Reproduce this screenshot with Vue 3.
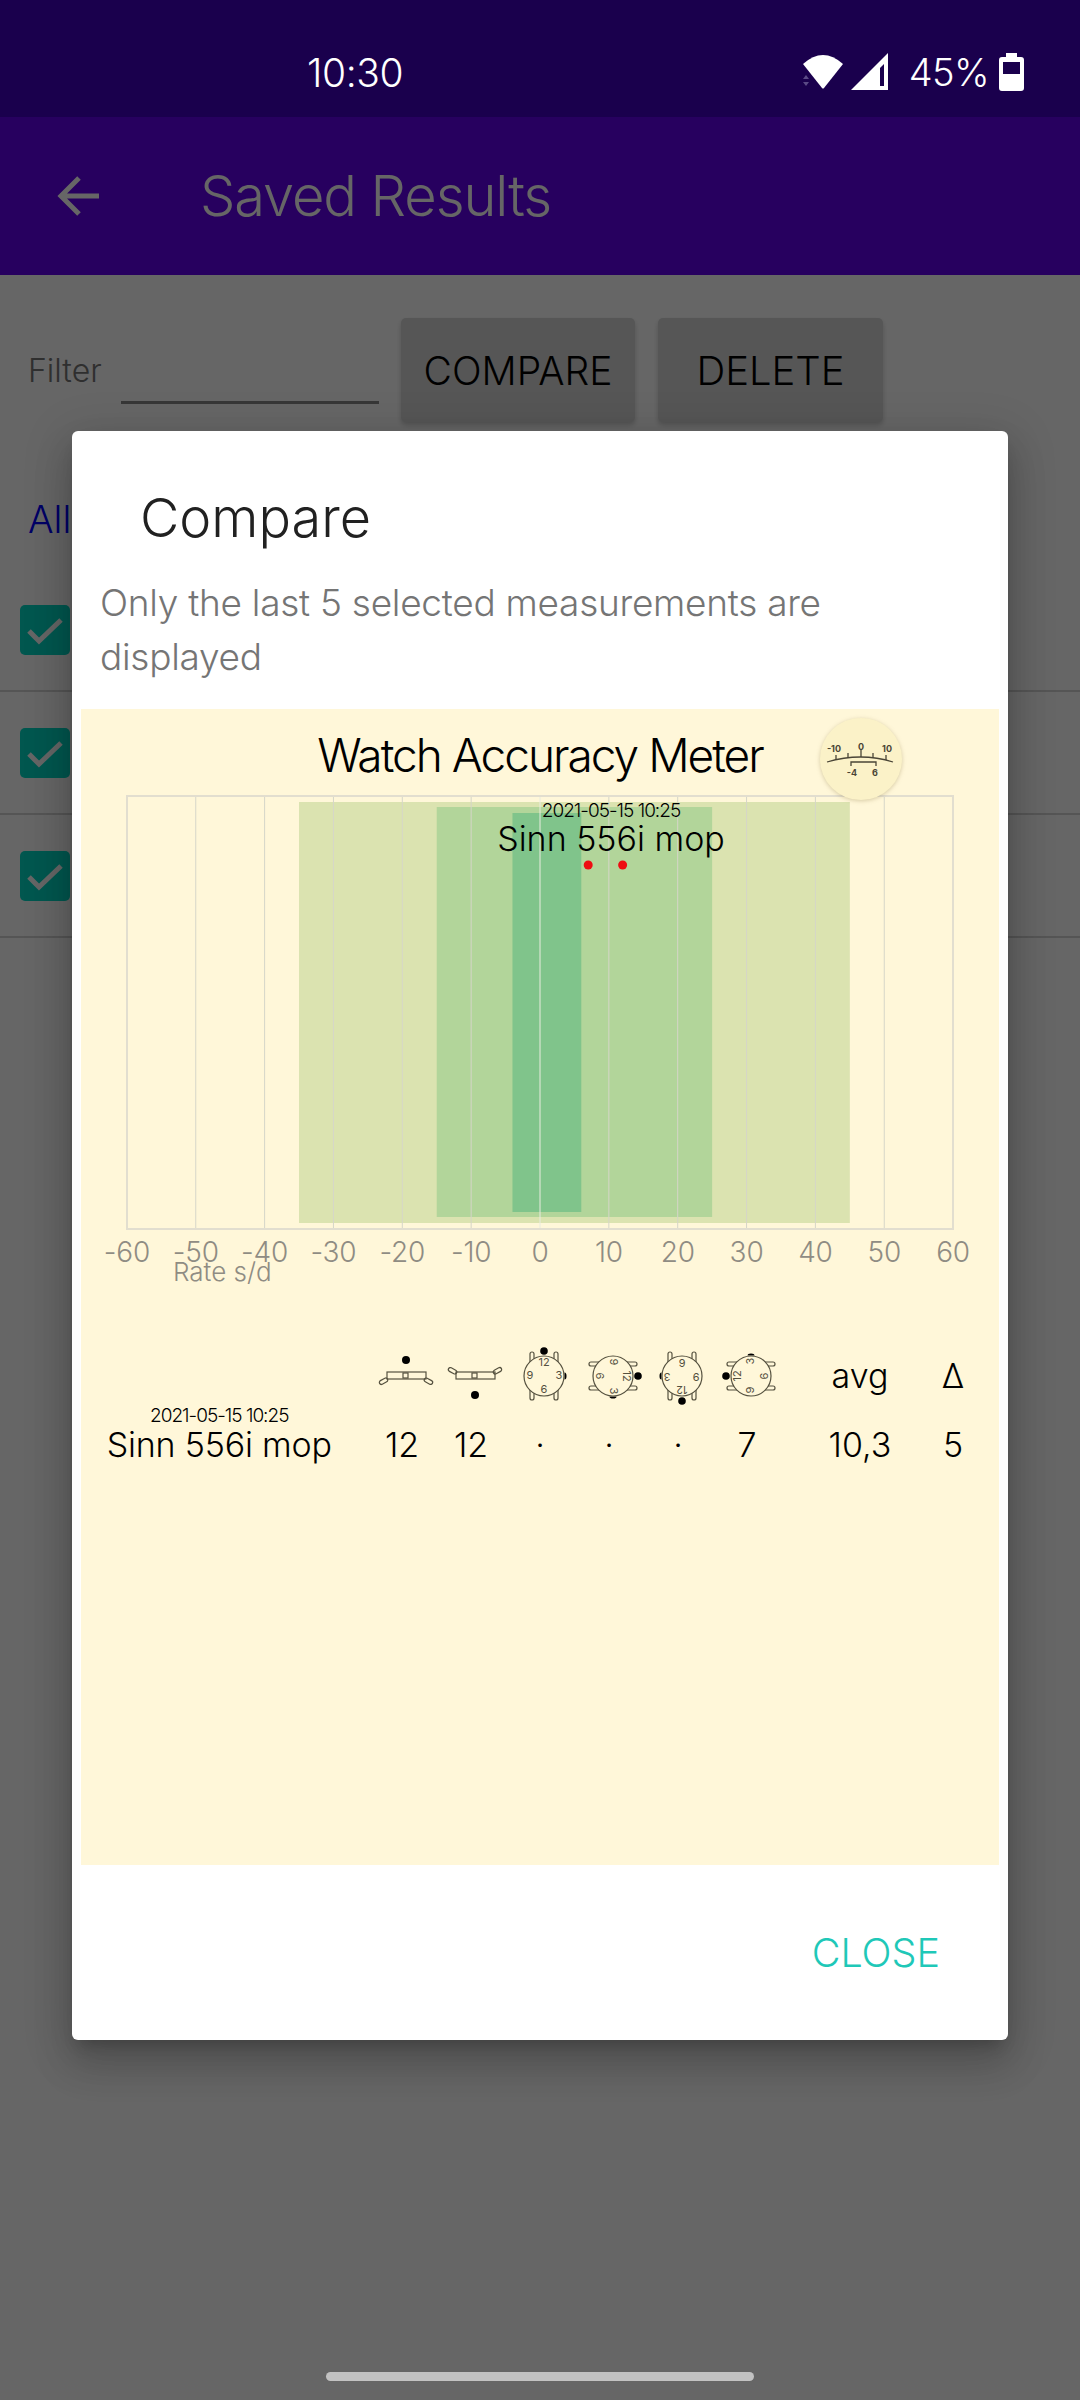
<script setup>
import { computed } from 'vue'

// chart scale: one second per day is 6.885px, zero sits at x=540
const sx = (v) => 540 + v * 6.885

const ticks = computed(() => {
  const out = []
  for (let v = -60; v <= 60; v += 10) out.push({ v, x: sx(v) })
  return out
})

const bands = [
  { from: -35, to: 45, top: 802, bottom: 1223, fill: '#dbe3b0' },
  { from: -15, to: 25, top: 807, bottom: 1217, fill: '#b2d59a' },
  { from: -4, to: 6, top: 813, bottom: 1212, fill: '#80c48b' },
]

const rates = [7, 12]
const values = ['12', '12', '·', '·', '·', '7']
const rotations = [0, 90, 180, 270]
</script>

<template>
  <div class="screen">
    <header class="status">
      <span class="time">10:30</span>
      <div class="status-right">
        <svg class="wifi" width="46" height="40" viewBox="0 0 46 40">
          <path d="M3 12 Q23 -6 43 12 L24 36 Q23 37 22 36 Z" fill="#fff" />
          <path d="M3 27 L6 23 L9 27 Z M3 30 L9 30 L6 34 Z" fill="#5b4a86" />
        </svg>
        <svg class="signal" width="38" height="38" viewBox="0 0 38 38">
          <path fill-rule="evenodd" d="M37 0 L37 37 L0 37 Z M33 11 L29 15 L29 33 L33 33 Z" fill="#fff" />
        </svg>
        <span class="pct">45%</span>
        <svg class="battery" width="25" height="38" viewBox="0 0 25 38">
          <path fill-rule="evenodd" d="M7 0 H18 V4 H22 Q25 4 25 7 V35 Q25 38 22 38 H3 Q0 38 0 35 V7 Q0 4 3 4 H7 Z M4 9 V21 H21 V9 Z" fill="#fff" />
        </svg>
      </div>
    </header>

    <div class="appbar">
      <svg width="48" height="48" viewBox="0 0 48 48">
        <path d="M44 24 H8 M24 6 L6 24 L24 42" fill="none" stroke="#fff" stroke-width="5" />
      </svg>
      <h1 class="appbar-title">Saved Results</h1>
    </div>

    <div class="filter-row">
      <span class="filter-label">Filter</span>
      <span class="filter-input"></span>
      <button type="button" class="raised compare-btn">COMPARE</button>
      <button type="button" class="raised delete-btn">DELETE</button>
    </div>

    <div class="all-link">All</div>
    <ul class="rows">
      <li v-for="n in 3" :key="n" class="row">
        <span class="check">
          <svg width="40" height="32" viewBox="0 0 40 32">
            <path d="M4 17 L14 27 L36 6" fill="none" stroke="#fff" stroke-width="5" />
          </svg>
        </span>
      </li>
    </ul>

    <div class="scrim"></div>

    <section class="dialog">
      <h2 class="dialog-title">Compare</h2>
      <p class="dialog-msg">Only the last 5 selected measurements are displayed</p>

      <div class="panel">
        <svg class="chart" width="918" height="636" viewBox="81 709 918 636">
          <text x="540" y="772" class="chart-title" text-anchor="middle">Watch Accuracy Meter</text>

          <rect v-for="b in bands" :key="b.from" :x="sx(b.from)" :y="b.top" :width="sx(b.to) - sx(b.from)" :height="b.bottom - b.top" :fill="b.fill" />

          <line v-for="t in ticks" :key="t.v" :x1="t.x" :x2="t.x" y1="796" y2="1229" :stroke="t.v === 0 ? '#e9ecdf' : '#d6d6c8'" stroke-width="1" />
          <rect x="127" y="796" width="826" height="433" fill="none" stroke="#e2decf" stroke-width="2" />

          <text v-for="t in ticks" :key="'l' + t.v" :x="t.x" y="1262" class="axis-label" text-anchor="middle">{{ t.v }}</text>
          <text x="173" y="1281" class="axis-title">Rate s/d</text>

          <text x="611" y="817" class="point-date" text-anchor="middle">2021-05-15 10:25</text>
          <text x="611" y="851" class="point-name" text-anchor="middle">Sinn 556i mop</text>
          <circle v-for="r in rates" :key="r" :cx="sx(r)" cy="865" r="4.5" fill="#ee0d12" />

          <!-- little gauge logo -->
          <g class="logo">
            <circle cx="861" cy="759" r="41" fill="#fbf2c8" />
          </g>
          <g fill="none" stroke="#4a4536" stroke-width="1.3">
            <path d="M827 762 Q861 752 893 762" />
            <path d="M836 760 V755 M848 758 V753 M861 757 V750 M873 758 V753 M886 760 V755" />
            <path d="M851 766 V762 H876 V766" />
          </g>
          <g class="logo-text" text-anchor="middle">
            <text x="834" y="752">-10</text>
            <text x="861" y="750">0</text>
            <text x="887" y="752">10</text>
            <text x="852" y="776">-4</text>
            <text x="875" y="776">6</text>
          </g>
        </svg>

        <div class="table">
          <span></span>
          <svg class="pos" width="68" height="62" viewBox="-34 -31 68 62">
            <circle cx="0" cy="-16" r="4" fill="#000" />
            <g fill="none" stroke="#55513f" stroke-width="1.2">
              <rect x="-19" y="-4" width="39" height="7" />
              <rect x="-3" y="-3" width="5" height="5" />
              <rect x="-27" y="3" width="9" height="4" rx="2" transform="rotate(-28 -22 5)" />
              <rect x="18" y="3" width="9" height="4" rx="2" transform="rotate(28 22 5)" />
            </g>
          </svg>
          <svg class="pos" width="68" height="62" viewBox="-34 -31 68 62">
            <circle cx="0" cy="19" r="4" fill="#000" />
            <g fill="none" stroke="#55513f" stroke-width="1.2">
              <rect x="-19" y="-4" width="39" height="7" />
              <rect x="-3" y="-3" width="5" height="5" />
              <rect x="-27" y="-7" width="9" height="4" rx="2" transform="rotate(28 -22 -5)" />
              <rect x="18" y="-7" width="9" height="4" rx="2" transform="rotate(-28 22 -5)" />
            </g>
          </svg>
          <svg v-for="deg in rotations" :key="deg" class="pos" width="68" height="62" viewBox="-34 -31 68 62">
            <g :transform="`rotate(${deg})`">
              <circle cx="0" cy="-25" r="3.8" fill="#000" />
              <path d="M20.5 -3.5 A2 3.5 0 0 1 20.5 3.5 Z" fill="#000" />
              <g fill="none" stroke="#55513f" stroke-width="1.2">
                <rect x="-14" y="-24" width="4" height="48" rx="2" />
                <rect x="10" y="-24" width="4" height="48" rx="2" />
                <circle r="20" fill="#fff7d9" />
              </g>
              <g class="dial" text-anchor="middle">
                <text x="0" y="-10">12</text>
                <text x="15" y="3">3</text>
                <text x="0" y="17">6</text>
                <text x="-14" y="3">9</text>
              </g>
            </g>
          </svg>
          <span class="head">avg</span>
          <span class="head">Δ</span>

          <div class="name-cell">
            <span class="name-date">2021-05-15 10:25</span>
            <span class="name-main">Sinn 556i mop</span>
          </div>
          <span v-for="(val, i) in values" :key="i" class="val">{{ val }}</span>
          <span class="val">10,3</span>
          <span class="val">5</span>
        </div>
      </div>

      <div class="dialog-actions">
        <span class="close-btn">CLOSE</span>
      </div>
    </section>

    <div class="home-pill"></div>
  </div>
</template>

<style>
html,
body {
  margin: 0;
  background: #fff;
}
</style>

<style scoped>
.screen {
  position: relative;
  width: 1080px;
  height: 2400px;
  overflow: hidden;
  background: #fff;
  font-family: Inter, "Liberation Sans", sans-serif;
  font-weight: 300;
}

.status {
  position: relative;
  z-index: 3;
  height: 117px;
  box-sizing: border-box;
  padding: 27px 56px 0 307px;
  display: flex;
  align-items: center;
  justify-content: space-between;
  background: #1a004d;
  color: #fff;
}

.time {
  font-size: 39px;
  letter-spacing: -0.4px;
}

.pct {
  font-size: 38px;
  letter-spacing: -0.6px;
}

.status-right {
  display: flex;
  align-items: center;
}

.signal {
  margin-left: 5px;
}

.pct {
  margin-left: 20px;
}

.battery {
  margin-left: 10px;
}

.appbar {
  height: 158px;
  display: flex;
  align-items: center;
  padding-left: 55px;
  background: #6200ee;
}

.appbar-title {
  margin: 0 0 0 97px;
  font-size: 56px;
  font-weight: 300;
  letter-spacing: -1.1px;
  color: #fff;
}

.filter-row {
  display: flex;
  align-items: center;
  height: 104px;
  margin-top: 43px;
  padding-left: 28px;
}

.filter-label {
  width: 93px;
  font-size: 32px;
  color: #757575;
}

.filter-input {
  width: 258px;
  height: 68px;
  box-sizing: border-box;
  border-bottom: 3px solid #8a8a8a;
  margin-right: 22px;
}

.raised {
  height: 104px;
  padding: 0;
  border: 0;
  border-radius: 5px;
  background: #d6d7d7;
  color: #000;
  font: inherit;
  font-size: 39px;
  box-shadow: 0 3px 5px rgba(0, 0, 0, 0.2);
}

.compare-btn {
  width: 234px;
  margin-right: 23px;
}

.delete-btn {
  width: 225px;
  font-size: 40px;
}

.all-link {
  margin: 71px 0 0 28px;
  height: 52px;
  line-height: 52px;
  font-size: 38px;
  color: #0000ff;
}

.rows {
  list-style: none;
  margin: 24px 0 0;
  padding: 0;
}

.row {
  height: 121px;
  border-bottom: 2px solid #d4d4d4;
  display: flex;
  align-items: center;
  padding-left: 20px;
}

.check {
  width: 50px;
  height: 50px;
  border-radius: 5px;
  background: #03dac5;
  display: flex;
  align-items: center;
  justify-content: center;
}

.scrim {
  position: absolute;
  inset: 0;
  background: rgba(0, 0, 0, 0.6);
}

.dialog {
  position: absolute;
  left: 72px;
  top: 431px;
  width: 936px;
  height: 1609px;
  display: flex;
  flex-direction: column;
  border-radius: 6px;
  background: #fff;
  box-shadow: 0 24px 38px 3px rgba(0, 0, 0, 0.14), 0 9px 46px 8px rgba(0, 0, 0, 0.12), 0 11px 15px -7px rgba(0, 0, 0, 0.2);
}

.dialog-title {
  margin: 55px 0 0 68px;
  line-height: 64px;
  font-size: 54px;
  font-weight: 300;
  color: #212121;
}

.dialog-msg {
  margin: 26px 60px 25px 28px;
  line-height: 54px;
  font-size: 37px;
  letter-spacing: -0.27px;
  color: #757575;
}

.panel {
  margin: 0 9px;
  height: 1156px;
  flex: none;
  background: #fff7d9;
}

.chart {
  display: block;
}

.chart-title {
  font-size: 46px;
  letter-spacing: -2px;
  fill: #000;
}

.axis-label {
  font-size: 28px;
  letter-spacing: -0.2px;
  fill: #8f8c83;
}

.axis-title {
  font-size: 26px;
  fill: #8f8c83;
}

.point-date {
  font-size: 19px;
  letter-spacing: -1px;
  fill: #000;
}

.point-name {
  font-size: 34px;
  fill: #000;
}

.logo {
  filter: drop-shadow(0 1px 2px rgba(120, 100, 40, 0.3));
}

.logo-text text {
  font-size: 9px;
  font-weight: 700;
  fill: #4a4536;
}

.dial text {
  font-size: 11px;
  font-weight: 400;
  fill: #55513f;
}

.table {
  display: grid;
  grid-template-columns: 286.5px repeat(6, 69px) 157px 29px;
  grid-template-rows: 61px auto;
  justify-items: center;
  align-items: center;
  color: #000;
}

.pos {
  margin-left: 8px;
}

.head {
  font-size: 34px;
}

.name-cell {
  display: flex;
  flex-direction: column;
  align-items: center;
  margin-right: 10px;
}

.name-date {
  line-height: 20px;
  font-size: 19px;
  letter-spacing: -1px;
}

.name-main {
  line-height: 38px;
  font-size: 34px;
  letter-spacing: -0.2px;
}

.val {
  align-self: end;
  line-height: 38px;
  font-size: 34px;
}

.dialog-actions {
  flex: 1;
  display: flex;
  align-items: center;
  justify-content: flex-end;
  padding-right: 68px;
}

.close-btn {
  font-size: 39.5px;
  color: #1fc8b8;
}

.home-pill {
  position: absolute;
  left: 326px;
  top: 2372px;
  width: 428px;
  height: 9px;
  border-radius: 5px;
  background: #c2c2c2;
}
</style>
